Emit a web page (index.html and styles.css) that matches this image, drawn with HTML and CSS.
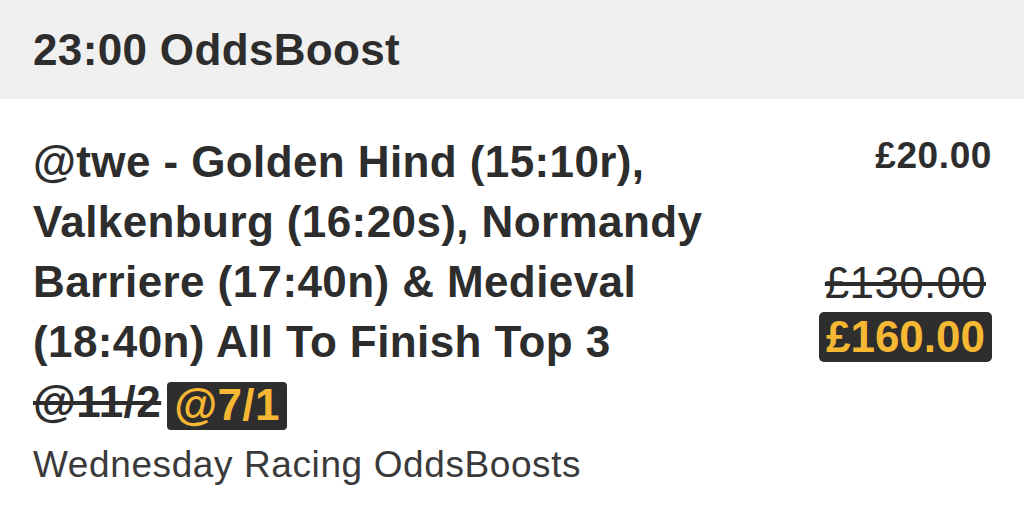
FILE: index.html
```html
<!DOCTYPE html>
<html lang="en">
<head>
  <meta charset="UTF-8" />
  <meta name="viewport" content="width=device-width, initial-scale=1.0" />
  <title>23:00 OddsBoost</title>
  <link rel="stylesheet" href="styles.css">
</head>
<body>
  <div class="boost-header">23:00 OddsBoost</div>
  <div class="boost-body">
    <div class="boost-info">
      <div class="boost-title">
        @twe - Golden Hind (15:10r), Valkenburg (16:20s), Normandy Barriere (17:40n) &amp; Medieval (18:40n) All To Finish Top 3
        <span class="was">@11/2</span><span class="now">@7/1</span>
      </div>
      <div class="boost-sub">Wednesday Racing OddsBoosts</div>
    </div>
    <div class="boost-prices">
      <div class="stake">£20.00</div>
      <div class="old-return">£130.00</div>
      <div class="new-return">£160.00</div>
    </div>
  </div>
</body>
</html>
```

FILE: styles.css
```css
body, html {
  margin: 0;
  padding: 0;
  font-family: "Liberation Sans", Arial, sans-serif;
  color: #2d2d2d;
  background: #fff;
}
.boost-header {
  background: #f0f0f0;
  height: 99px;
  line-height: 99px;
  padding: 0 33px;
  font-size: 44px;
  font-weight: bold;
  letter-spacing: 0.35px;
}
.boost-body {
  display: flex;
  padding: 33px 32px 0 33px;
  gap: 30px;
}
.boost-info {
  flex: 1;
}
.boost-title {
  font-size: 44px;
  font-weight: bold;
  line-height: 60px;
  letter-spacing: 0.4px;
}
.was {
  text-decoration: line-through;
}
.now {
  display: inline-block;
  line-height: 44px;
  background: #2e2e2e;
  color: #f6b733;
  padding: 1px 7px 3px;
  margin-left: 6px;
  border-radius: 4px;
  vertical-align: -3px;
}
.boost-sub {
  font-size: 37px;
  line-height: 48px;
  margin-top: 9px;
  color: #3a3a3a;
  letter-spacing: 0.6px;
}
.boost-prices {
  width: 230px;
  display: flex;
  flex-direction: column;
  align-items: flex-end;
}
.stake {
  font-size: 37px;
  font-weight: bold;
  line-height: 48px;
  letter-spacing: 0.6px;
}
.old-return {
  font-size: 44px;
  line-height: 44px;
  margin-top: 81px;
  margin-right: 6px;
  letter-spacing: 0.3px;
  text-decoration: line-through;
}
.new-return {
  font-size: 44px;
  font-weight: bold;
  line-height: 44px;
  margin-top: 7px;
  padding: 3px 7px;
  background: #2e2e2e;
  color: #f6b733;
  border-radius: 5px;
}
```
